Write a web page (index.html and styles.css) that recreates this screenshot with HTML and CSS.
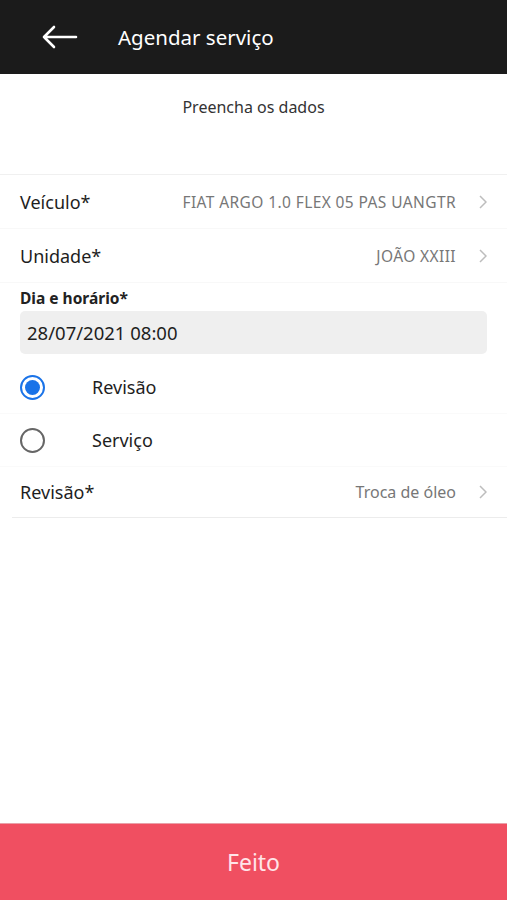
FILE: index.html
```html
<!DOCTYPE html>
<html lang="pt">
<head>
  <meta charset="UTF-8">
  <meta name="viewport" content="width=device-width, initial-scale=1.0">
  <title>Agendar serviço</title>
  <link rel="stylesheet" href="styles.css">
</head>
<body>
  <header class="topbar">
    <svg class="back" width="36" height="24" viewBox="0 0 36 24">
      <path d="M2 12 H34 M12 2 L2 12 L12 22" fill="none" stroke="#fff" stroke-width="2.6" stroke-linecap="round" stroke-linejoin="round"/>
    </svg>
    <h1>Agendar serviço</h1>
  </header>

  <main class="form">
    <p class="intro">Preencha os dados</p>

    <div class="rows">
      <div class="row">
        <span class="label">Veículo*</span>
        <span class="value caps">FIAT ARGO 1.0 FLEX 05 PAS UANGTR</span>
        <svg class="chev" width="8" height="14" viewBox="0 0 8 14"><path d="M1 1 L7 7 L1 13" fill="none" stroke="#bdbdbd" stroke-width="1.5"/></svg>
      </div>
      <div class="row">
        <span class="label">Unidade*</span>
        <span class="value caps">JOÃO XXIII</span>
        <svg class="chev" width="8" height="14" viewBox="0 0 8 14"><path d="M1 1 L7 7 L1 13" fill="none" stroke="#bdbdbd" stroke-width="1.5"/></svg>
      </div>

      <div class="field">
        <label class="field-label">Dia e horário*</label>
        <div class="input">28/07/2021 08:00</div>
      </div>

      <div class="radios">
        <div class="radio">
          <span class="dot checked"></span>
          <span>Revisão</span>
        </div>
        <div class="radio">
          <span class="dot"></span>
          <span>Serviço</span>
        </div>
      </div>

      <div class="row last">
        <span class="label">Revisão*</span>
        <span class="value">Troca de óleo</span>
        <svg class="chev" width="8" height="14" viewBox="0 0 8 14"><path d="M1 1 L7 7 L1 13" fill="none" stroke="#bdbdbd" stroke-width="1.5"/></svg>
      </div>
    </div>
  </main>

  <footer class="done">Feito</footer>
</body>
</html>
```
FILE: styles.css
```css
body {
  font-family: "Noto Sans", "Open Sans", sans-serif;
  margin: 0;
  padding: 0;
  background: white;
  color: #1e1e1e;
  height: 900px;
  display: flex;
  flex-direction: column;
}

.topbar {
  background: #1b1b1b;
  height: 74px;
  display: flex;
  align-items: center;
  padding-left: 42px;
  box-sizing: border-box;
}

.back {
  display: block;
}

.topbar h1 {
  margin: 0 0 0 40px;
  font-size: 20.5px;
  font-weight: normal;
  color: white;
}

.form {
  flex: 1;
}

.intro {
  margin: 0;
  height: 101px;
  box-sizing: border-box;
  padding-top: 22px;
  text-align: center;
  font-size: 16px;
  color: #333;
  border-bottom: 1px solid #f0f0f0;
}

.row {
  display: flex;
  align-items: center;
  height: 53px;
  padding: 0 20px;
  border-bottom: 1px solid #f8f8f8;
}

.row.last {
  height: 50px;
  margin-left: 12px;
  padding-left: 8px;
  border-bottom: 1px solid #ececec;
}

.label {
  font-size: 18px;
  color: #1e1e1e;
}

.value {
  margin-left: auto;
  font-size: 16px;
  color: #777;
}

.caps {
  font-size: 15.5px;
  letter-spacing: 0.4px;
}

.chev {
  margin-left: 23px;
  display: block;
}

.field {
  padding: 4px 20px 0;
}

.field-label {
  display: block;
  font-size: 15.5px;
  font-weight: bold;
  color: #222;
  margin-bottom: 2px;
}

.input {
  background: #efefef;
  border-radius: 5px;
  height: 43px;
  line-height: 43px;
  padding: 0 7px;
  font-size: 18.5px;
  color: #1e1e1e;
}

.radios {
  margin-top: 7px;
}

.radio {
  display: flex;
  align-items: center;
  height: 52px;
  padding: 0 20px;
  font-size: 18px;
  border-bottom: 1px solid #fafafa;
}

.dot {
  width: 21px;
  height: 21px;
  border: 2px solid #666;
  border-radius: 50%;
  margin-right: 47px;
  box-sizing: content-box;
  position: relative;
}

.dot.checked {
  border-color: #1a73e8;
}

.dot.checked::after {
  content: "";
  position: absolute;
  left: 3px;
  top: 3px;
  width: 15px;
  height: 15px;
  border-radius: 50%;
  background: #1a73e8;
}

.done {
  background: #f04f61;
  color: #ffe4e8;
  height: 76px;
  display: flex;
  align-items: center;
  justify-content: center;
  font-size: 23px;
  border-top: 1px solid #e9a0a8;
}
```
